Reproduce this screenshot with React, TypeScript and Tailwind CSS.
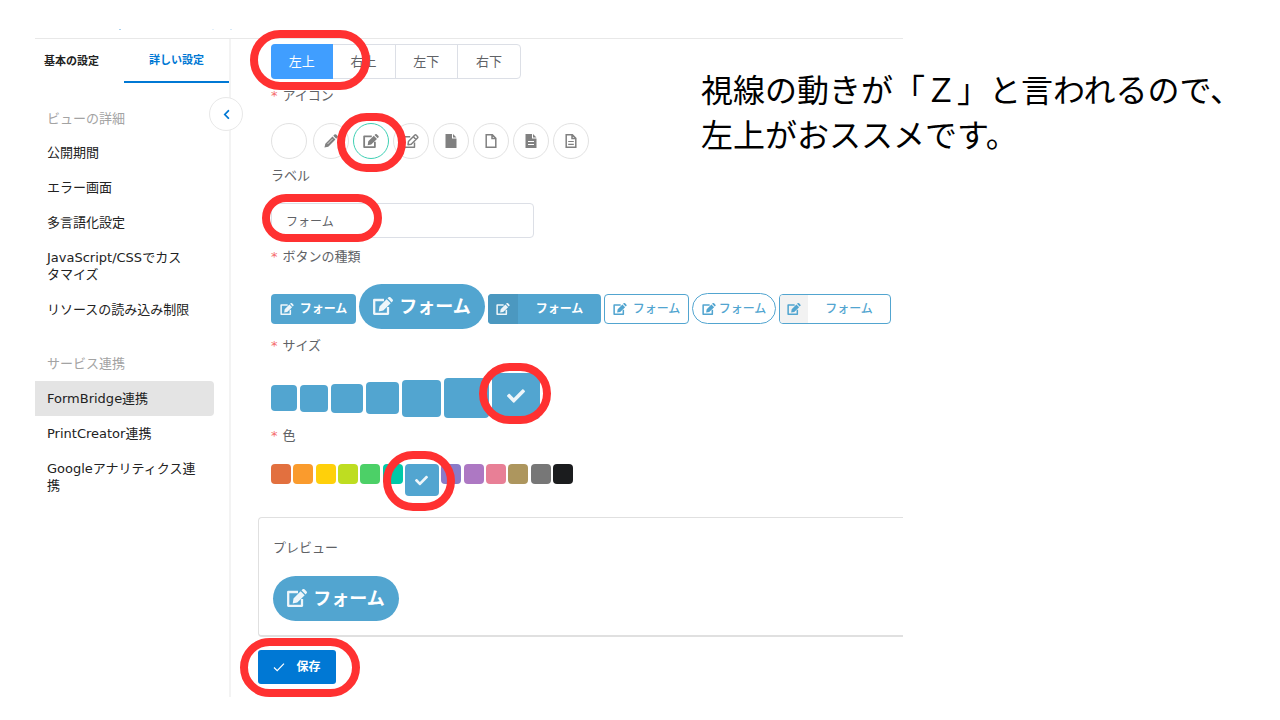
import type { ReactNode } from "react";
import { FaCheck, FaChevronLeft } from "react-icons/fa";

type IconProps = { className?: string };

function PencilIcon({ className = "" }: IconProps) {
  return (
    <svg viewBox="0 0 16 16" className={className} fill="currentColor">
      <path d="M10.6 2 14 5.4l1.3-1.3a1.4 1.4 0 0 0 0-2L13.900.7a1.400 1.400 0 0 0-2 0ZM9.700 2.900 1.500 11.100.5 15.500l4.400-1 8.200-8.200Z" />
      <path d="m4 11.500 6-6" stroke="#fff" strokeWidth=".8" />
    </svg>
  );
}

function EditIcon({ className = "" }: IconProps) {
  return (
    <svg viewBox="0 0 20 18" className={className} fill="currentColor">
      <path d="M11 3H1.200v13.800H15V10" fill="none" stroke="currentColor" strokeWidth="2.300" strokeLinejoin="round" />
      <path d="M13.600 2.200 17.700 6.300 10.300 13.600 5.700 14.400 6.500 9.400ZM14.500 1.300 15.300.5a1.700 1.700 0 0 1 2.400 0L19.400 2.200a1.700 1.700 0 0 1 0 2.400L18.600 5.400Z" />
    </svg>
  );
}

function EditOutlineIcon({ className = "" }: IconProps) {
  return (
    <svg viewBox="0 0 20 18" className={className} fill="none" stroke="currentColor" strokeWidth="1.900" strokeLinejoin="round">
      <path d="M9 3.500H1.200v13.500h13.300V11" />
      <path d="m6.700 9.600 8-8a1.500 1.500 0 0 1 2.100 0l1.500 1.500a1.500 1.500 0 0 1 0 2.100l-8 8-4.100.5ZM13 3.600l3.400 3.400" />
    </svg>
  );
}

function FileIcon({ className = "" }: IconProps) {
  return (
    <svg viewBox="0 0 14 14" className={className} fill="currentColor">
      <path d="M1.500 0H8v4.500h4.500V14h-11ZM9 0l3.500 3.500H9Z" />
    </svg>
  );
}

function FileOutlineIcon({ className = "" }: IconProps) {
  return (
    <svg viewBox="0 0 14 14" className={className} fill="none" stroke="currentColor" strokeWidth="1.500">
      <path d="M2.200.8h6.200l3.400 3.400v9H2.200ZM8 .8v3.700h3.800" />
    </svg>
  );
}

function DocumentIcon({ className = "" }: IconProps) {
  return (
    <svg viewBox="0 0 14 14" className={className} fill="currentColor">
      <path d="M1.500 0H8v4.500h4.500V14h-11ZM9 0l3.500 3.500H9Z" />
      <path d="M4 7.500h6M4 10.500h6" stroke="#fff" strokeWidth="1.200" />
    </svg>
  );
}

function DocumentOutlineIcon({ className = "" }: IconProps) {
  return (
    <svg viewBox="0 0 14 14" className={className} fill="none" stroke="currentColor" strokeWidth="1.500">
      <path d="M2.200.8h6.200l3.400 3.400v9H2.200ZM8 .8v3.700h3.800" />
      <path d="M4.200 7.500h5.600M4.200 10.300h5.600" strokeWidth="1.200" />
    </svg>
  );
}

const icons = [
  { name: "なし", icon: null, size: "" },
  { name: "鉛筆", icon: PencilIcon, size: "size-[14px]" },
  { name: "編集", icon: EditIcon, size: "h-[14px] w-4" },
  { name: "編集(線)", icon: EditOutlineIcon, size: "h-[14px] w-4" },
  { name: "ファイル", icon: FileIcon, size: "size-[14px]" },
  { name: "ファイル(線)", icon: FileOutlineIcon, size: "size-[14px]" },
  { name: "文書", icon: DocumentIcon, size: "size-[14px]" },
  { name: "文書(線)", icon: DocumentOutlineIcon, size: "size-[14px]" },
];

const sizes = [
  "h-[26px] w-[26px]",
  "h-[27px] w-[28px]",
  "h-[29px] w-[32px]",
  "h-[32px] w-[33px]",
  "h-[37px] w-[39px]",
  "h-[40px] w-[45px]",
  "h-[46px] w-[48px] self-start",
];

const colors = [
  "bg-[#e2703f]",
  "bg-[#fa9b2d]",
  "bg-[#ffd00a]",
  "bg-[#bedd21]",
  "bg-[#4cd067]",
  "bg-[#00c9a8]",
  "bg-[#52a5d0]",
  "bg-[#8a7bc8]",
  "bg-[#ad78c3]",
  "bg-[#e87f96]",
  "bg-[#ad965e]",
  "bg-[#777777]",
  "bg-[#1b1c1e]",
];

function Ring({ className }: { className: string }) {
  return (
    <span
      aria-hidden="true"
      className={`pointer-events-none absolute z-10 rounded-full border-8 border-[#ff3131] ${className}`}
    />
  );
}

function FieldLabel({ children, required = true }: { children: ReactNode; required?: boolean }) {
  return (
    <span className="mb-[10px] flex h-[34px] items-center gap-[5px] text-[13px] text-[#606266]">
      {required && <span className="text-[#f56c6c]">*</span>}
      {children}
    </span>
  );
}

function NavItem({ children, active = false }: { children: ReactNode; active?: boolean }) {
  return (
    <li>
      <a
        href="#"
        className={`mr-[15px] block rounded-r py-[9px] pr-3 pl-3 text-[13px] leading-[17px] text-[#222] ${active ? "bg-[#e4e4e4]" : ""}`}
      >
        {children}
      </a>
    </li>
  );
}

function PillButton() {
  return (
    <button className="flex h-[45px] w-[126px] items-center justify-center gap-[6px] rounded-full bg-[#52a5d0] pb-px text-[18px] font-bold text-white">
      <EditIcon className="h-[18px] w-5 opacity-90" />
      フォーム
    </button>
  );
}

export default function App() {
  return (
    <div className="relative min-h-screen bg-white pt-7 pl-[35px] font-['DejaVu_Sans','Noto_Sans_CJK_JP',sans-serif]">
      <div className="grid grid-cols-[868fr_377fr]">
        <div>
          <header className="flex h-[11px] border-b border-[#e8e8e8] pt-px">
            <span className="ml-[84px] h-px w-0.5 bg-[#a5d0f0]" />
            <span className="ml-[91px] h-px w-0.5 bg-[#e3f0fa]" />
            <span className="ml-[16px] h-px w-0.5 bg-[#d5e9f8]" />
          </header>
          <div className="flex">
            <aside className="relative w-[196px] shrink-0 border-r-2 border-[#f3f3f3]">
              <div className="flex h-[44px] text-[11px] font-bold">
                <button className="w-[89px] pt-0.5 pr-4 pl-0 whitespace-nowrap text-[#222]">
                  基本の設定
                </button>
                <button className="flex-1 border-b-2 border-[#0078d4] pt-[3px] whitespace-nowrap text-[#0078d4]">
                  詳しい設定
                </button>
              </div>
              <button
                aria-label="サイドバーを閉じる"
                className="absolute top-[58px] -right-[14px] flex size-[34px] items-center justify-center rounded-full border border-[#e8e8e8] bg-white text-[#0078d4]"
              >
                <FaChevronLeft className="size-[11px]" />
              </button>
              <nav>
                <h2 className="mt-[26px] mb-[6px] pl-3 text-[13px] leading-5 text-[#a3a3a3]">ビューの詳細</h2>
                <ul>
                  <NavItem>公開期間</NavItem>
                  <NavItem>エラー画面</NavItem>
                  <NavItem>多言語化設定</NavItem>
                  <NavItem>
                    JavaScript/CSSでカス
                    <br />
                    タマイズ
                  </NavItem>
                  <NavItem>リソースの読み込み制限</NavItem>
                </ul>
                <h2 className="mt-[27px] mb-[7px] pl-3 text-[13px] leading-5 text-[#a3a3a3]">サービス連携</h2>
                <ul>
                  <NavItem active>FormBridge連携</NavItem>
                  <NavItem>PrintCreator連携</NavItem>
                  <NavItem>Googleアナリティクス連携</NavItem>
                </ul>
              </nav>
            </aside>

            <main className="min-w-0 flex-1 pt-[5px] pb-[13px] pl-[27px]">
              <div className="pl-[13px]">
                <div className="flex h-[35px] w-[250px] rounded border border-[#dcdfe6] text-[13px] text-[#606266]">
                  <button className="relative -my-px -ml-px flex-1 rounded-l bg-[#409eff] text-white">
                    左上
                    <Ring className="-top-[14px] -right-[37px] -bottom-[11px] -left-[21px]" />
                  </button>
                  <button className="flex-1">右上</button>
                  <button className="flex-1 border-l border-[#dcdfe6]">左下</button>
                  <button className="flex-1 border-l border-[#dcdfe6]">右下</button>
                </div>

                <FieldLabel>アイコン</FieldLabel>
                <div className="flex gap-1">
                  {icons.map(({ name, icon: Icon, size }, i) => (
                    <button
                      key={name}
                      aria-label={name}
                      className={`relative flex size-9 items-center justify-center rounded-full border text-[#808080] ${i === 2 ? "border-[#3fd0b4]" : "border-[#e2e2e2]"} ${i === 0 ? "mr-[2px]" : ""}`}
                    >
                      {Icon && <Icon className={size} />}
                      {i === 2 && <Ring className="-top-[11px] -right-[18px] -bottom-[14px] -left-[17px]" />}
                    </button>
                  ))}
                </div>

                <label>
                  <FieldLabel required={false}>ラベル</FieldLabel>
                  <span className="relative mb-[2px] block w-[263px]">
                    <input
                      type="text"
                      defaultValue="フォーム"
                      className="block h-[35px] w-full rounded border border-[#dcdfe6] px-[14px] text-[12px] text-[#606266]"
                    />
                    <Ring className="-top-[9px] -left-[9px] h-12 w-[120px]" />
                  </span>
                </label>

                <FieldLabel>ボタンの種類</FieldLabel>
                <div className="flex items-end gap-[3px] text-[12px] whitespace-nowrap">
                  <button className="mb-[5px] flex h-[30px] w-[85px] items-center justify-center gap-[6px] rounded bg-[#52a5d0] font-bold text-white">
                    <EditIcon className="h-3 w-[14px] opacity-90" />
                    フォーム
                  </button>
                  <PillButton />
                  <button className="mb-[5px] flex h-[30px] w-[113px] overflow-hidden rounded bg-[#52a5d0] font-bold text-white">
                    <span className="flex h-full w-[30px] items-center justify-center bg-[#4b98c0]">
                      <EditIcon className="h-3 w-[14px] opacity-90" />
                    </span>
                    <span className="flex h-full flex-1 items-center justify-center">フォーム</span>
                  </button>
                  <button className="mb-[5px] flex h-[30px] w-[85px] items-center justify-center gap-[6px] rounded border border-[#52a5d0] font-medium text-[#52a5d0]">
                    <EditIcon className="h-3 w-[14px]" />
                    フォーム
                  </button>
                  <button className="mb-[5px] flex h-[31px] w-[84px] items-center justify-center gap-[3px] rounded-full border border-[#52a5d0] font-medium text-[#52a5d0]">
                    <EditIcon className="h-3 w-[14px]" />
                    フォーム
                  </button>
                  <button className="mb-[5px] flex h-[30px] w-[112px] overflow-hidden rounded border border-[#52a5d0] font-medium text-[#52a5d0]">
                    <span className="flex h-full w-7 items-center justify-center bg-[#f2f2f2]">
                      <EditIcon className="h-3 w-[14px]" />
                    </span>
                    <span className="flex h-full flex-1 items-center justify-center">フォーム</span>
                  </button>
                </div>

                <FieldLabel>サイズ</FieldLabel>
                <div className="-mb-1 flex h-[50px] w-[269px] items-center justify-between">
                  {sizes.map((size, i) => (
                    <button
                      key={size}
                      aria-label={`サイズ${i + 1}`}
                      className={`relative flex shrink-0 items-center justify-center rounded bg-[#52a5d0] text-white ${size}`}
                    >
                      {i === 6 && (
                        <>
                          <FaCheck className="size-[18px] opacity-90" />
                          <Ring className="-top-[10px] -right-[11px] -bottom-[5px] -left-[13px]" />
                        </>
                      )}
                    </button>
                  ))}
                </div>

                <FieldLabel>色</FieldLabel>
                <div className="mt-[11px] flex w-[302px] items-start justify-between">
                  {colors.map((color, i) => (
                    <button
                      key={color}
                      aria-label={`色${i + 1}`}
                      className={`relative flex shrink-0 items-center justify-center rounded text-white ${color} ${i === 6 ? "h-8 w-[34px]" : "size-5"}`}
                    >
                      {i === 6 && (
                        <>
                          <FaCheck className="size-[13px] opacity-90" />
                          <Ring className="-top-[13px] -right-[16px] -bottom-[15px] -left-[22px]" />
                        </>
                      )}
                    </button>
                  ))}
                </div>
              </div>

              <section className="mt-[21px] rounded-l border border-r-0 border-b-2 border-[#e0e0e0] pt-5 pb-[14px] pl-[14px]">
                <h3 className="mb-[18px] text-[13px] leading-5 text-[#606266]">プレビュー</h3>
                <PillButton />
              </section>

              <button className="relative mt-[13px] flex h-[34px] w-[78px] items-center justify-center gap-[11px] rounded-[3px] bg-[#0078d4] text-[12px] font-bold text-white">
                <svg viewBox="0 0 12 12" className="size-3" fill="none" stroke="currentColor" strokeWidth="1.2">
                  <path d="M1 6.5 4.2 9.6 11 2.6" />
                </svg>
                保存
                <Ring className="-top-[12px] -right-[24px] -bottom-[13px] -left-[18px]" />
              </button>
            </main>
          </div>
        </div>
      </div>

      <p className="absolute top-[69px] left-[701px] text-[32px] leading-[45px] font-normal whitespace-nowrap text-black">
        視線の動きが「Ｚ」と言われるので、
        <br />
        左上がおススメです。
      </p>
    </div>
  );
}
